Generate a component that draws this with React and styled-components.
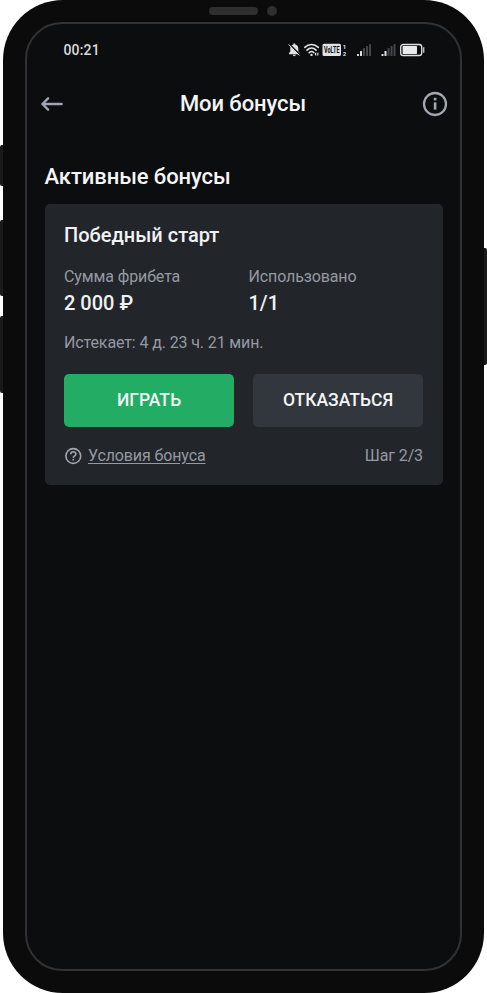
import React from 'react';
import styled, { createGlobalStyle } from 'styled-components';

const GlobalStyle = createGlobalStyle`
    * {
        box-sizing: border-box;
    }
    body {
        margin: 0;
        background-color: #fff;
        font-family: Roboto, "Noto Sans", sans-serif;
    }
`

const Stage = styled.div`
    position: relative;
    width: 487px;
    height: 993px;
    padding: 0 3px;
    overflow: hidden;
`
const SideKey = styled.div`
    position: absolute;
    top: ${props => props.$top}px;
    ${props => props.$side}: 0;
    width: 6px;
    height: ${props => props.$size}px;
    border-radius: ${props => props.$side === 'left' ? '2px 0 0 2px' : '0 2px 2px 0'};
    background-color: #1a1a1a;
`
const Phone = styled.div`
    position: relative;
    display: flex;
    flex-direction: column;
    height: 993px;
    padding: 0 22px 22px;
    border-radius: 60px;
    background-color: #0b0b0b;
`
const Notch = styled.div`
    display: flex;
    flex: none;
    align-items: center;
    justify-content: center;
    gap: 9px;
    height: 22px;
    padding-right: 2px;
`
const Speaker = styled.div`
    width: 49px;
    height: 8px;
    border-radius: 4px;
    background-color: #2f2f2f;
`
const Camera = styled.div`
    width: 10px;
    height: 10px;
    border-radius: 50%;
    background-color: #2f2f2f;
`
const Screen = styled.div`
    flex: 1;
    border: 2px solid #323232;
    border-radius: 37px;
    background-color: #0b0d0f;
`
const StatusBar = styled.div`
    display: flex;
    align-items: center;
    justify-content: space-between;
    height: 51px;
    padding: 0 35px 0 36.5px;
`
const Time = styled.span`
    font-size: 14px;
    font-weight: 500;
    letter-spacing: 0.15px;
    color: #d9dbdd;
`
const Header = styled.header`
    display: flex;
    align-items: center;
    justify-content: space-between;
    height: 58px;
    padding: 0 12px 0 13px;
`
const Title = styled.h1`
    margin: 0;
    font-size: 22px;
    font-weight: 500;
    line-height: 26px;
    letter-spacing: -0.08px;
    color: #f4f5f6;
`
const Content = styled.main`
    padding: 31px 17.5px 0;
`
const Card = styled.section`
    height: 281.5px;
    margin-top: 13.5px;
    padding: 18px 19.5px 0;
    border-radius: 5px;
    background-color: #22252a;
`
const CardTitle = styled.h2`
    margin: 0;
    font-size: 20px;
    font-weight: 500;
    line-height: 26px;
    color: #f0f1f2;
`
const Stats = styled.div`
    display: grid;
    grid-template-columns: 184.5px 1fr;
    margin-top: 15px;
`
const Label = styled.div`
    font-size: 16px;
    line-height: 27px;
    letter-spacing: -0.12px;
    color: #959aa2;
`
const Value = styled.div`
    font-size: 20px;
    font-weight: 500;
    line-height: 26px;
    color: #f0f1f2;
`
const Expires = styled(Label)`
    margin-top: 13px;
`
const Actions = styled.div`
    display: grid;
    grid-template-columns: 170px 170px;
    justify-content: space-between;
    margin-top: 18px;
`
const Button = styled.button`
    height: 53px;
    padding: 0;
    border: none;
    border-radius: 5px;
    background-color: ${props => props.$primary ? '#22ac64' : '#32363d'};
    color: #f3f5f6;
    font-family: inherit;
    font-size: 17.5px;
    font-weight: 500;
    cursor: pointer;
`
const Footer = styled.div`
    display: flex;
    align-items: center;
    justify-content: space-between;
    margin-top: 15.5px;
`
const Terms = styled.a`
    display: flex;
    align-items: center;
    gap: 6px;
    color: #959aa2;
    cursor: pointer;
`
const TermsText = styled(Label)`
    text-decoration: underline;
    text-underline-offset: 2px;
`

const bars = [
    { x: 0, h: 2, on: true },
    { x: 3, h: 5, on: true },
    { x: 6, h: 8 },
    { x: 9, h: 10 },
    { x: 12, h: 12 },
]

const Signal = ({ x }) => (
    <g transform={`translate(${x} 1)`}>
        {bars.map(b => (
            <rect key={b.x} x={b.x} y={12 - b.h} width="2" height={b.h} rx="0.6" fill={b.on ? '#e2e4e6' : '#43474a'} />
        ))}
    </g>
)

const StatusIcons = () => (
    <svg width="137" height="14" viewBox="0 0 137 14" fill="none">
        {/* muted bell */}
        <path d="M1 11.2V10L2.3 8.6V5.4C2.3 3.3 3.5 1.9 5.4 1.5V1.1C5.4 .1 7.2 .1 7.2 1.1V1.5C9.1 1.9 10.3 3.3 10.3 5.4V8.6L11.6 10V11.2Z" fill="#dfe1e3" />
        <path d="M4.8 11.8H7.8C7.6 13.7 5 13.7 4.8 11.8Z" fill="#dfe1e3" />
        <path d="M1.4 .9L12.2 12" stroke="#0b0d0f" strokeWidth="1.5" />
        <path d="M.6 1.4L11.4 12.5" stroke="#dfe1e3" strokeWidth="1" />
        {/* wifi */}
        <g stroke="#dfe1e3" strokeWidth="1.6" strokeLinecap="round">
            <path d="M16.8 4.4C20.7 .6 26.4 .6 30.3 4.4" />
            <path d="M19 7.1C21.7 4.4 25.4 4.4 28.1 7.1" />
            <path d="M21.2 9.7C22.6 8.3 24.5 8.3 25.9 9.7" />
        </g>
        <circle cx="23.5" cy="11.9" r="1.2" fill="#dfe1e3" />
        <path d="M27.6 9.8V12.4M29.8 9.8V12.4" stroke="#dfe1e3" strokeWidth="1.2" />
        {/* volte */}
        <rect x="34.5" y="0.8" width="18.5" height="12.2" rx="1.6" fill="#dfe1e3" />
        <text x="36" y="10.2" textLength="15.5" lengthAdjust="spacingAndGlyphs" fontSize="9" fontWeight="700" fill="#0b0d0f">VoLTE</text>
        <text x="54.8" y="5.6" fontSize="6" fontWeight="700" fill="#dfe1e3">1</text>
        <text x="54.8" y="13" fontSize="6" fontWeight="700" fill="#dfe1e3">2</text>
        <Signal x={69} />
        <Signal x={93.5} />
        {/* battery */}
        <rect x="112.7" y="1.5" width="21" height="11" rx="2.6" stroke="#dfe1e3" strokeWidth="1.3" />
        <rect x="114.6" y="3" width="14.4" height="8" rx="0.8" fill="#e9ebec" />
        <path d="M135.6 4.2V9.8" stroke="#b9bbbd" strokeWidth="1.6" />
    </svg>
)

const BackIcon = () => (
    <svg width="24" height="24" viewBox="0 0 24 24" fill="none" stroke="#a0a5ae" strokeWidth="2.4" strokeLinecap="round" strokeLinejoin="round">
        <path d="M21.6 12H2.4M8.1 6.3L2.4 12L8.1 17.7" />
    </svg>
)

const InfoIcon = () => (
    <svg width="26" height="26" viewBox="0 0 26 26" fill="none">
        <circle cx="13" cy="13" r="11" stroke="#a3a8b0" strokeWidth="2.3" />
        <rect x="11.8" y="6.8" width="2.6" height="2.6" fill="#a3a8b0" />
        <rect x="11.8" y="11.4" width="2.6" height="7.2" fill="#a3a8b0" />
    </svg>
)

const HelpIcon = () => (
    <svg width="18" height="18" viewBox="0 0 18 18" fill="none" stroke="#a0a5ae" strokeWidth="1.6">
        <circle cx="9.3" cy="9" r="7.4" />
        <path d="M6.7 7.3C6.7 3.9 11.9 4 11.9 7C11.9 8.8 9.3 9 9.3 11" />
        <path d="M9.3 12V13.6" />
    </svg>
)

const App = () => {
    return (
        <Stage>
            <GlobalStyle />
            <SideKey $side="left" $top={145} $size={41} />
            <SideKey $side="left" $top={220} $size={76} />
            <SideKey $side="left" $top={316} $size={77} />
            <SideKey $side="right" $top={248} $size={117} />
            <Phone>
                <Notch>
                    <Speaker />
                    <Camera />
                </Notch>
                <Screen>
                    <StatusBar>
                        <Time>00:21</Time>
                        <StatusIcons />
                    </StatusBar>
                    <Header>
                        <BackIcon />
                        <Title>Мои бонусы</Title>
                        <InfoIcon />
                    </Header>
                    <Content>
                        <Title as="h2">Активные бонусы</Title>
                        <Card>
                            <CardTitle>Победный старт</CardTitle>
                            <Stats>
                                <div>
                                    <Label>Сумма фрибета</Label>
                                    <Value>2 000 ₽</Value>
                                </div>
                                <div>
                                    <Label>Использовано</Label>
                                    <Value>1/1</Value>
                                </div>
                            </Stats>
                            <Expires>Истекает: 4 д. 23 ч. 21 мин.</Expires>
                            <Actions>
                                <Button $primary>ИГРАТЬ</Button>
                                <Button>ОТКАЗАТЬСЯ</Button>
                            </Actions>
                            <Footer>
                                <Terms>
                                    <HelpIcon />
                                    <TermsText>Условия бонуса</TermsText>
                                </Terms>
                                <Label>Шаг 2/3</Label>
                            </Footer>
                        </Card>
                    </Content>
                </Screen>
            </Phone>
        </Stage>
    );
};

export default App;
